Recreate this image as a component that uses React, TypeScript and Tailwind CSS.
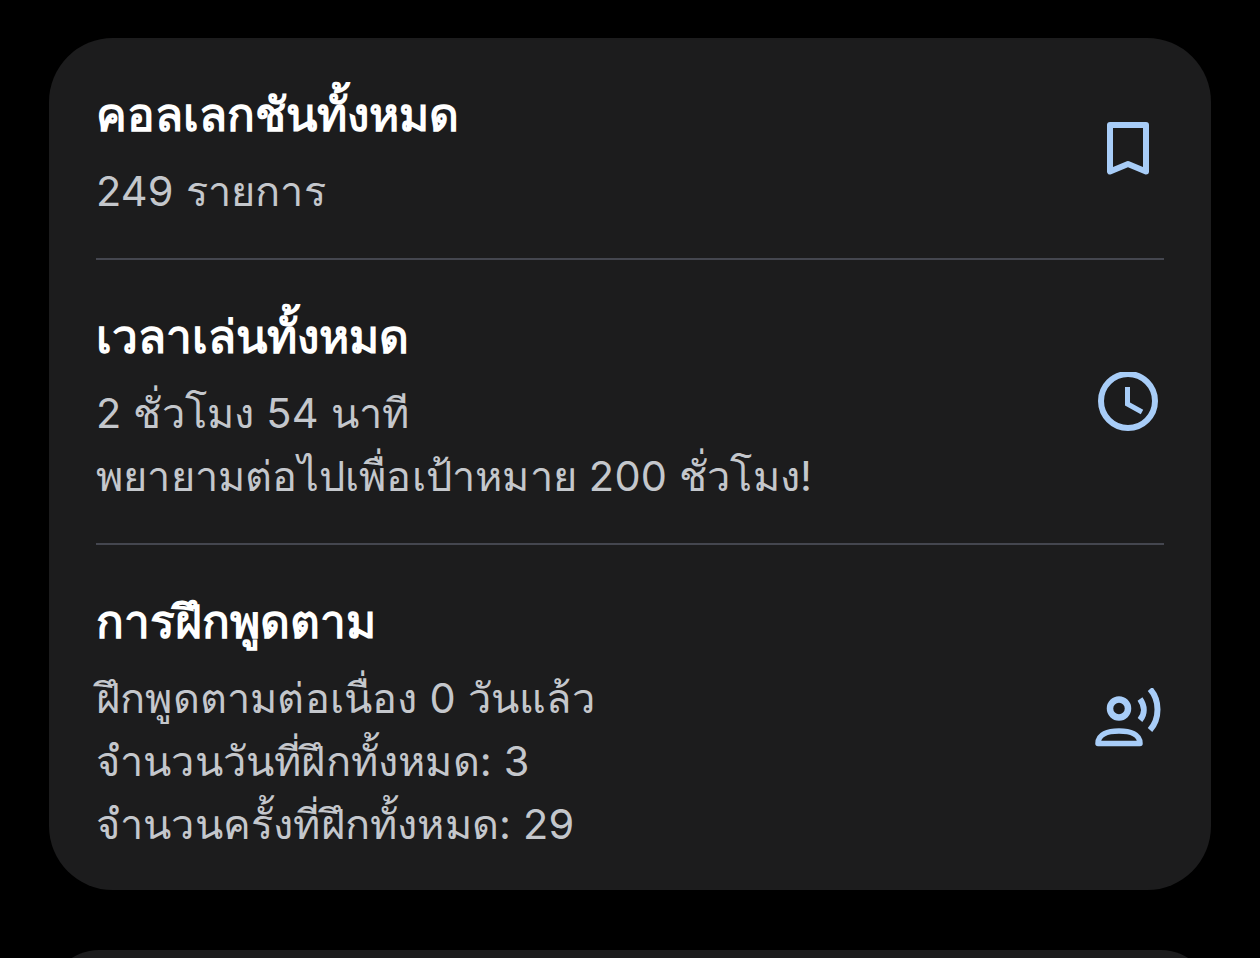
import type { ReactNode } from "react";

const F = "font-['Inter','Noto_Sans','Noto_Sans_CJK_SC',sans-serif]";

function Bookmark() {
  return (
    <svg width="44" height="56" viewBox="0 0 44 56" fill="none" stroke="#a8cdf8" strokeWidth="6" strokeLinejoin="round">
      <path d="M4 5H40V51.5L22 44L4 51.5Z" />
    </svg>
  );
}
function Clock() {
  return (
    <svg width="60" height="60" viewBox="0 1 60 60" fill="none" stroke="#a8cdf8" strokeWidth="6">
      <circle cx="30" cy="30" r="27" />
      <path d="M29.5 16V33L44 41" strokeWidth="5" />
    </svg>
  );
}
function Voice() {
  return (
    <svg width="68" height="60" viewBox="0 1 68 60" fill="none" stroke="#a8cdf8" strokeWidth="6">
      <circle cx="25" cy="21.5" r="9" strokeWidth="6.5" />
      <path d="M4 56.5C4 47 14 44 25 44C36 44 46 47 46 56.5Z" strokeWidth="5.5" strokeLinejoin="round" />
      <path d="M46 12C51 19 51 27 46 33" />
      <path d="M56 2C66 13 66 32 56 43" />
    </svg>
  );
}

function Row({ title, lines, icon, className }: { title: string; lines: string[]; icon: ReactNode; className: string }) {
  return (
    <div className={`flex items-center justify-between ${className}`}>
      <div className="flex flex-col pt-[13px]">
        <div className="text-[46px] leading-[56px] font-bold text-white">{title}</div>
        <div className="mt-[18px] flex flex-col">
          {lines.map((l) => (
            <div key={l} className="text-[41.5px] leading-[63px] tracking-[0.2px] text-[#c4c7cc]">{l}</div>
          ))}
        </div>
      </div>
      <div className="flex w-[72px] justify-center">{icon}</div>
    </div>
  );
}

export default function App() {
  return (
    <div className={`h-[958px] w-[1260px] overflow-hidden bg-black pt-[38px] ${F}`}>
      <div className="mx-[49px] h-[852px] rounded-[64px] bg-[#1c1c1d] px-[47px]">
        <Row className="h-[222px] border-b-2 border-[#44464f]" title="คอลเลกชันทั้งหมด" lines={["249 รายการ"]} icon={<Bookmark />} />
        <Row className="h-[285px] border-b-2 border-[#44464f]" title="เวลาเล่นทั้งหมด" lines={["2 ชั่วโมง 54 นาที", "พยายามต่อไปเพื่อเป้าหมาย 200 ชั่วโมง!"]} icon={<Clock />} />
        <Row className="h-[345px]" title="การฝึกพูดตาม" lines={["ฝึกพูดตามต่อเนื่อง 0 วันแล้ว", "จำนวนวันที่ฝึกทั้งหมด: 3", "จำนวนครั้งที่ฝึกทั้งหมด: 29"]} icon={<Voice />} />
      </div>
      <div className="mx-[49px] mt-[60px] h-[100px] rounded-[64px] bg-[#1c1c1d]" />
    </div>
  );
}
